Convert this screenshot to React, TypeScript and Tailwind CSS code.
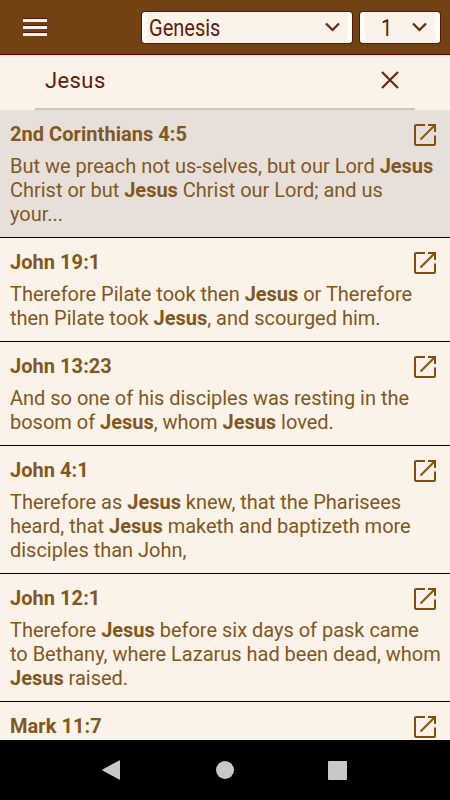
import { Fragment } from "react";

type SearchResult = {
  reference: string;
  // one entry per line, search hits are wrapped in asterisks
  lines: string[];
};

const RESULTS: SearchResult[] = [
  {
    reference: "2nd Corinthians 4:5",
    lines: ["But we preach not us-selves, but our Lord *Jesus*", "Christ or but *Jesus* Christ our Lord; and us", "your..."],
  },
  {
    reference: "John 19:1",
    lines: ["Therefore Pilate took then *Jesus* or Therefore", "then Pilate took *Jesus*, and scourged him."],
  },
  {
    reference: "John 13:23",
    lines: ["And so one of his disciples was resting in the", "bosom of *Jesus*, whom *Jesus* loved."],
  },
  {
    reference: "John 4:1",
    lines: ["Therefore as *Jesus* knew, that the Pharisees", "heard, that *Jesus* maketh and baptizeth more", "disciples than John,"],
  },
  {
    reference: "John 12:1",
    lines: ["Therefore *Jesus* before six days of pask came", "to Bethany, where Lazarus had been dead, whom", "*Jesus* raised."],
  },
  { reference: "Mark 11:7", lines: [] },
];

function Highlighted({ text }: { text: string }) {
  return (
    <>
      {text.split("*").map((part, i) =>
        i % 2 === 1 ? (
          <b key={i} className="font-bold">
            {part}
          </b>
        ) : (
          <Fragment key={i}>{part}</Fragment>
        ),
      )}
    </>
  );
}

function ChevronIcon() {
  return (
    <svg width="15" height="10" viewBox="0 0 15 10" fill="none" stroke="#61250c" strokeWidth="2.2">
      <path d="M1 1.5 7.5 8 14 1.5" />
    </svg>
  );
}

function OpenIcon() {
  return (
    <svg className="mt-0.5 shrink-0" width="22" height="22" viewBox="0 0 22 22" fill="none">
      <g stroke="#844d0b" strokeWidth="2">
        <path d="M11 1H2Q1 1 1 2V20Q1 21 2 21H20Q21 21 21 20V11.5" />
        <path d="M14 1H21V8" />
      </g>
      <path d="M6.5 15.5 20.5 1.5" stroke="#875821" strokeWidth="2.2" />
    </svg>
  );
}

function Header() {
  return (
    <header className="flex h-[55px] shrink-0 items-center border-b border-[#5b0505] bg-[#704214] pr-[10px] pl-[23px]">
      <button aria-label="Menu" className="flex flex-col gap-1">
        <span className="h-[3px] w-6 bg-[#f8eff0] shadow-[0_-1px_0_#5b1705]" />
        <span className="h-[3px] w-6 bg-[#f8eff0] shadow-[0_-1px_0_#5b1705]" />
        <span className="h-[3px] w-6 bg-[#f8eff0] shadow-[0_-1px_0_#5b1705]" />
      </button>
      <div className="ml-auto flex gap-2">
        <button className="flex h-[31px] w-[210px] items-center justify-between rounded-[3px] border-x-[5px] border-[#fffdf8] bg-[#fbf2e9] pr-[7px] pl-[2px] shadow-[0_0_0_1px_#5b1705]">
          <span className="mt-0.5 origin-left scale-x-[0.87] text-[23px] leading-none">Genesis</span>
          <ChevronIcon />
        </button>
        <button className="flex h-[31px] w-[80px] items-center justify-between rounded-[3px] border-x-[5px] border-[#fffdf8] bg-[#fbf2e9] pr-[8px] pl-[16px] shadow-[0_0_0_1px_#5b1705]">
          <span className="mt-0.5 origin-left scale-x-[0.87] text-[23px] leading-none">1</span>
          <ChevronIcon />
        </button>
      </div>
    </header>
  );
}

function SearchBar() {
  return (
    <div className="h-[55px] shrink-0 bg-linear-to-b from-[#e9dfd4] to-[#fbf2e9] to-[3px] px-[35px]">
      <div className="flex h-[55px] items-center justify-between border-b-2 border-[#cfc4b8] pr-4 pb-1 pl-[10px]">
        <span className="mt-0.5 text-[22px] tracking-[0.4px]">Jesus</span>
        <button aria-label="Clear">
          <svg width="18" height="18" viewBox="0 0 18 18" fill="none" stroke="#642b0b" strokeWidth="2.2">
            <path d="M1 1 17 17M17 1 1 17" />
          </svg>
        </button>
      </div>
    </div>
  );
}

function ResultRow({ result }: { result: SearchResult }) {
  return (
    <li className="shrink-0 border-b border-[#180000] pt-3 pb-[11px] pl-[10px] first:bg-[#e7e0da]">
      <div className="flex h-6 justify-between pr-[14px]">
        <h2 className="text-[20px] leading-6 font-bold tracking-[0.05px]">{result.reference}</h2>
        <OpenIcon />
      </div>
      <p className="mt-2 text-[20px] leading-6 tracking-[-0.015px] whitespace-nowrap">
        {result.lines.map((line) => (
          <span key={line} className="block">
            <Highlighted text={line} />
          </span>
        ))}
      </p>
    </li>
  );
}

function NavBar() {
  return (
    <nav className="flex h-[60px] shrink-0 items-center bg-black pl-[102px]">
      <svg width="18" height="20" viewBox="0 0 18 20" fill="#c8c8c8">
        <path d="M18 .7V19.3Q18 20 17.2 19.6L.5 10.4Q0 10 .5 9.6L17.2.4Q18 0 18 .7Z" />
      </svg>
      <span className="ml-24 size-[18px] rounded-full bg-[#c8c8c8]" />
      <span className="ml-[94px] size-[19px] rounded-[1px] bg-[#c8c8c8]" />
    </nav>
  );
}

export default function App() {
  return (
    <div className="flex h-[800px] w-[450px] flex-col overflow-hidden bg-[#fbf2e9] font-[Roboto,sans-serif] text-[#5f1d08]">
      <Header />
      <SearchBar />
      <ul className="flex min-h-0 flex-1 flex-col overflow-hidden text-[#815822]">
        {RESULTS.map((result) => (
          <ResultRow key={result.reference} result={result} />
        ))}
      </ul>
      <NavBar />
    </div>
  );
}
